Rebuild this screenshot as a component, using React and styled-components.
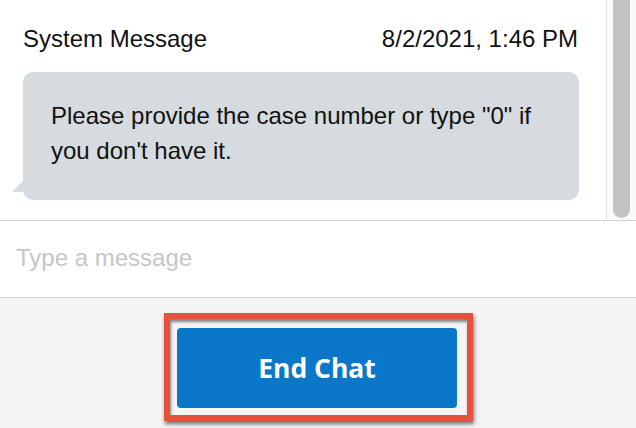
import styled, { createGlobalStyle } from 'styled-components';

const GlobalStyle = createGlobalStyle`
  html, body {
    margin: 0;
    padding: 0;
    background: #ffffff;
  }
  body {
    font-family: "Liberation Sans", Arial, Helvetica, sans-serif;
  }
  * {
    box-sizing: border-box;
  }
`;

// --- Layout ---

const Widget = styled.div`
  display: flex;
  flex-direction: column;
  width: 636px;
  height: 428px;
  overflow: hidden;
`;

const Pane = styled.div`
  display: flex;
  height: 221px;
  border-bottom: 1px solid #d3d3d3;
  background: #ffffff;
`;

const MessageList = styled.div`
  flex: 1;
  padding: 25px 28px 0 23px;
  overflow: hidden;
`;

const ScrollTrack = styled.div`
  width: 30px;
  padding: 0 6px 2px 6px;
  border-left: 1px solid #e6e6e6;
  background: #fafafa;
  display: flex;
`;

const ScrollThumb = styled.div`
  flex: 1;
  background: #c2c2c2;
  border-radius: 0 0 9px 9px;
`;

// --- Message ---

const MessageHeader = styled.div`
  display: flex;
  justify-content: space-between;
  align-items: baseline;
  font-size: 24px;
  color: #111111;
`;

const Bubble = styled.div`
  position: relative;
  margin-top: 19px;
  margin-right: -1px;
  padding: 26px 26px 32px 28px;
  background: #d5dbde;
  border-radius: 10px;
  font-size: 24px;
  line-height: 35px;
  color: #111111;

  &::before {
    content: '';
    position: absolute;
    left: -11px;
    bottom: 8px;
    width: 0;
    height: 0;
    border-left: 11px solid transparent;
    border-bottom: 11px solid #d5dbde;
  }
`;

// --- Composer ---

const Composer = styled.div`
  height: 77px;
  border-bottom: 1px solid #d3d3d3;
  background: #ffffff;
  display: flex;
`;

const MessageInput = styled.input`
  flex: 1;
  border: none;
  outline: none;
  background: transparent;
  padding: 0 16px 3px 16px;
  font-family: "Liberation Sans", Arial, Helvetica, sans-serif;
  font-size: 24px;
  color: #111111;

  &::placeholder {
    color: #c6c6c6;
  }
`;

// --- Footer ---

const Footer = styled.div`
  flex: 1;
  background: #f4f4f4;
  display: flex;
  justify-content: center;
  align-items: flex-start;
  padding-top: 15px;
  padding-left: 1px;
`;

const Highlight = styled.div`
  display: flex;
  padding: 9px 10px 7px 7px;
  border: 6px solid #e4513c;
  box-shadow: 1px 3px 4px rgba(0, 0, 0, 0.55), inset 1px 3px 3px rgba(0, 0, 0, 0.45);
`;

const EndButton = styled.button`
  width: 280px;
  height: 80px;
  border: none;
  border-radius: 4px;
  background: #0a77c9;
  color: #ffffff;
  font-family: "Open Sans", "Noto Sans", sans-serif;
  font-size: 26.5px;
  font-weight: 700;
  cursor: pointer;
`;

export default function App() {
  return (
    <Widget>
      <GlobalStyle />
      <Pane>
        <MessageList>
          <MessageHeader>
            <span>System Message</span>
            <span>8/2/2021, 1:46 PM</span>
          </MessageHeader>
          <Bubble>
            Please provide the case number or type "0" if you don't have it.
          </Bubble>
        </MessageList>
        <ScrollTrack>
          <ScrollThumb />
        </ScrollTrack>
      </Pane>
      <Composer>
        <MessageInput placeholder="Type a message" />
      </Composer>
      <Footer>
        <Highlight>
          <EndButton>End Chat</EndButton>
        </Highlight>
      </Footer>
    </Widget>
  );
}
